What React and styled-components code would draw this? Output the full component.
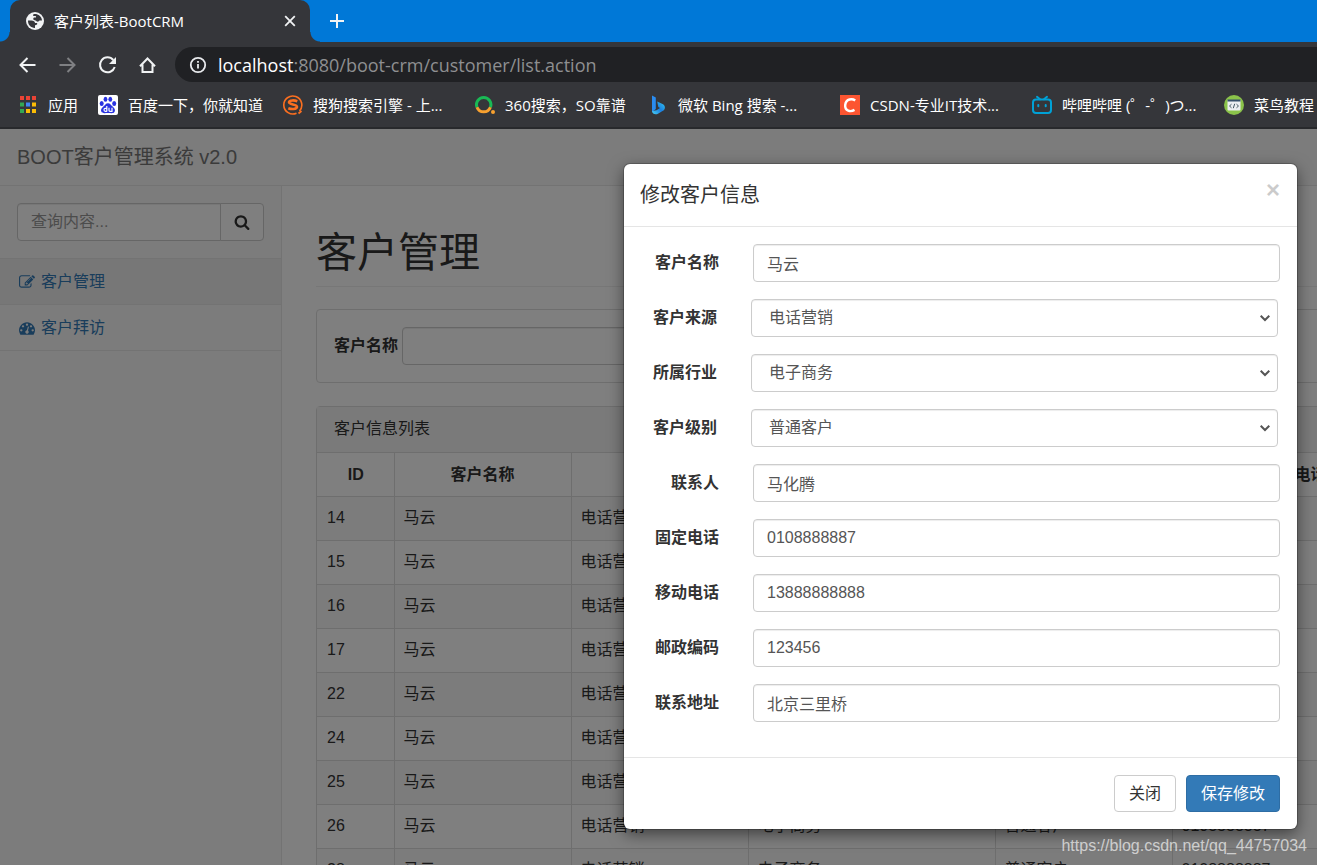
import { useState } from 'react';
import { styled, createGlobalStyle, ThemeProvider } from 'styled-components';

const theme = {
  colors: {
    chrome: '#35363a',
    omnibox: '#202124',
    strip: '#0078d7',
    text: '#333333',
    field: '#555555',
    link: '#337ab7',
    border: '#dddddd',
    light: '#eeeeee',
    lightest: '#f8f8f8',
  },
  fonts: {
    page: '"Liberation Sans", "Noto Sans CJK SC", sans-serif',
    chrome: '"Open Sans", "Noto Sans CJK SC", sans-serif',
  },
};

const GlobalStyle = createGlobalStyle`
  *, *::before, *::after {
    box-sizing: border-box;
  }
  body {
    margin: 0;
    overflow: hidden;
  }
  button, input, select {
    font: inherit;
    color: inherit;
    margin: 0;
  }
  svg {
    display: block;
    flex: none;
  }
`;

/* ---------- browser frame ---------- */

const Screen = styled.div`
  display: flex;
  flex-direction: column;
  height: 100vh;
  overflow: hidden;
  font-family: ${p => p.theme.fonts.page};
  font-size: 16px;
  line-height: 22px;
  color: ${p => p.theme.colors.text};
`;
const Chrome = styled.header`
  flex: none;
  background-color: ${p => p.theme.colors.chrome};
  border-bottom: 2px solid #28292c;
  font-family: ${p => p.theme.fonts.chrome};
  color: #ffffff;
`;
const TabStrip = styled.div`
  display: flex;
  align-items: center;
  height: 42px;
  padding-left: 10px;
  background-color: ${p => p.theme.colors.strip};
`;
const Tab = styled.div`
  position: relative;
  display: flex;
  align-items: center;
  width: 300px;
  height: 42px;
  padding: 0 14px 0 16px;
  border-radius: 10px 10px 0 0;
  background-color: ${p => p.theme.colors.chrome};
  font-size: 15px;
  &::before,
  &::after {
    content: '';
    position: absolute;
    bottom: 0;
    width: 10px;
    height: 10px;
  }
  &::before {
    right: 100%;
    background: radial-gradient(circle at 0 0, transparent 9px, ${p => p.theme.colors.chrome} 10px);
  }
  &::after {
    left: 100%;
    background: radial-gradient(circle at 100% 0, transparent 9px, ${p => p.theme.colors.chrome} 10px);
  }
`;
const TabTitle = styled.span`
  flex: 1;
  margin-left: 10px;
  white-space: nowrap;
`;
const IconButton = styled.button`
  display: flex;
  align-items: center;
  justify-content: center;
  width: ${p => p.$size}px;
  height: ${p => p.$size}px;
  padding: 0;
  border: 0;
  background: none;
  color: ${p => (p.$dim ? '#7f8083' : '#f1f3f4')};
`;
const NewTab = styled(IconButton)`
  margin-left: 17px;
`;
const Toolbar = styled.div`
  display: flex;
  align-items: center;
  gap: 20px;
  height: 45px;
  padding-left: 18px;
`;
const Omnibox = styled.div`
  display: flex;
  align-items: center;
  flex: 1;
  height: 35px;
  margin-left: -3px;
  padding-left: 14px;
  border-radius: 18px 0 0 18px;
  background-color: ${p => p.theme.colors.omnibox};
  font-size: 18px;
  white-space: nowrap;
`;
const Address = styled.span`
  margin-left: 11px;
  color: #8e8f91;
  b {
    font-weight: 400;
    color: #ffffff;
  }
`;
const Bookmarks = styled.nav`
  display: flex;
  align-items: center;
  gap: 20px;
  height: 40px;
  padding: 0 0 4px 18px;
  overflow: hidden;
`;
const Bookmark = styled.a`
  display: flex;
  align-items: center;
  gap: 10px;
  flex: none;
  width: ${p => (p.$width ? `${p.$width}px` : 'auto')};
  color: #ffffff;
  font-size: 15px;
  line-height: 20px;
  text-decoration: none;
  white-space: nowrap;
`;

/* ---------- page ---------- */

const Page = styled.div`
  position: relative;
  display: flex;
  flex-direction: column;
  flex: 1;
  min-height: 0;
  background-color: #ffffff;
`;
const Navbar = styled.div`
  flex: none;
  height: 57px;
  padding: 17px;
  border-bottom: 1px solid #e7e7e7;
  background-color: ${p => p.theme.colors.lightest};
`;
const Brand = styled.a`
  color: #777777;
  font-size: 20px;
  text-decoration: none;
`;
const Columns = styled.div`
  display: flex;
  flex: 1;
  min-height: 0;
`;
const Sidebar = styled.aside`
  flex: none;
  width: 282px;
  border-right: 1px solid #e7e7e7;
  background-color: ${p => p.theme.colors.lightest};
`;
const SearchForm = styled.form`
  display: flex;
  padding: 17px;
  border-bottom: 1px solid #e7e7e7;
`;
const TextBox = styled.input`
  width: 100%;
  min-width: 0;
  height: 38px;
  padding: 6px 13px;
  border: 1px solid #cccccc;
  border-radius: 4px;
  background-color: #ffffff;
  box-shadow: inset 0 1px 1px rgba(0, 0, 0, 0.075);
  color: ${p => p.theme.colors.field};
  &::placeholder {
    color: #999999;
  }
`;
const SearchBox = styled(TextBox)`
  flex: 1;
  border-radius: 4px 0 0 4px;
`;
const SearchButton = styled.button`
  display: flex;
  align-items: center;
  justify-content: center;
  width: 44px;
  height: 38px;
  margin-left: -1px;
  border: 1px solid #cccccc;
  border-radius: 0 4px 4px 0;
  background-color: #ffffff;
`;
const MenuLink = styled.a`
  display: flex;
  align-items: center;
  gap: 6px;
  height: 46px;
  padding: 0 19px;
  border-bottom: 1px solid #e7e7e7;
  background-color: ${p => (p.$active ? p.theme.colors.light : 'transparent')};
  color: ${p => p.theme.colors.link};
  text-decoration: none;
`;
const Main = styled.main`
  flex: 1;
  min-width: 0;
  padding: 44px 0 0 34px;
  overflow: hidden;
`;
const Heading = styled.h1`
  margin: 0 0 22px;
  padding-bottom: 10px;
  border-bottom: 1px solid #eeeeee;
  font-size: 41px;
  line-height: 46px;
  font-weight: 400;
`;
const Panel = styled.section`
  width: max-content;
  min-width: 1590px;
  margin-bottom: 23px;
  border: 1px solid ${p => p.theme.colors.border};
  border-radius: 4px;
`;
const FilterForm = styled.form`
  display: flex;
  align-items: center;
  gap: 4px;
  padding: 17px;
  label {
    font-weight: 700;
  }
  input {
    width: 232px;
  }
`;
const PanelTitle = styled.div`
  height: 46px;
  padding: 11px 17px;
  border-bottom: 1px solid ${p => p.theme.colors.border};
  background-color: #f5f5f5;
`;
const Table = styled.table`
  width: 100%;
  table-layout: fixed;
  border-collapse: collapse;
  tr {
    height: 44px;
  }
  thead tr {
    height: 43px;
  }
  tbody tr:nth-child(odd) {
    background-color: #f9f9f9;
  }
  th,
  td {
    padding: 10px 9px;
    border: 1px solid ${p => p.theme.colors.border};
    border-top: 0;
  }
  th {
    padding-bottom: 8px;
  }
  th:first-child,
  td:first-child {
    padding-left: 10px;
    border-left: 0;
  }
`;
const Col = styled.col`
  width: ${p => (p.$width ? `${p.$width}px` : 'auto')};
`;

/* ---------- dialog ---------- */

const Backdrop = styled.div`
  position: absolute;
  inset: 0;
  display: flex;
  justify-content: flex-end;
  align-items: flex-start;
  padding: 35px 20px 0;
  background-color: rgba(0, 0, 0, 0.5);
`;
const Dialog = styled.div`
  width: 673px;
  border-radius: 6px;
  background-color: #ffffff;
  box-shadow:
    0 0 0 1px rgba(0, 0, 0, 0.2),
    0 5px 16px rgba(0, 0, 0, 0.5);
`;
const DialogHeader = styled.div`
  display: flex;
  justify-content: space-between;
  padding: 17px 17px 16px 16px;
  border-bottom: 1px solid #e5e5e5;
`;
const DialogTitle = styled.h4`
  margin: 0;
  font-size: 20px;
  line-height: 29px;
  font-weight: 400;
`;
const CloseButton = styled.button`
  height: 18px;
  padding: 0;
  border: 0;
  background: none;
  color: #000000;
  font-size: 24px;
  font-weight: 700;
  line-height: 18px;
  opacity: 0.2;
`;
const DialogBody = styled.form`
  display: grid;
  gap: 17px;
  padding: 17px 17px 35px;
`;
const FormRow = styled.div`
  display: grid;
  grid-template-columns: ${p => (p.$select ? '76px' : '78px')} 1fr;
  column-gap: 34px;
  align-items: center;
  padding-right: ${p => (p.$select ? '2px' : '0')};
`;
const FieldLabel = styled.label`
  font-weight: 700;
  text-align: right;
`;
const SelectWrap = styled.div`
  position: relative;
  color: ${p => p.theme.colors.field};
  svg {
    position: absolute;
    top: 14px;
    right: 8px;
    pointer-events: none;
  }
`;
const Select = styled(TextBox).attrs({ as: 'select' })`
  appearance: none;
  padding: 6px 17px;
`;
const DialogFooter = styled.div`
  display: flex;
  justify-content: flex-end;
  gap: 10px;
  padding: 17px;
  border-top: 1px solid #e5e5e5;
`;
const Button = styled.button`
  height: 37px;
  padding: 0 14px;
  border: 1px solid ${p => (p.$primary ? '#2e6da4' : '#cccccc')};
  border-radius: 4px;
  background-color: ${p => (p.$primary ? p.theme.colors.link : '#ffffff')};
  color: ${p => (p.$primary ? '#ffffff' : p.theme.colors.text)};
`;
const Watermark = styled.span`
  position: absolute;
  right: 10px;
  bottom: 8px;
  color: rgba(255, 255, 255, 0.65);
  font-size: 16px;
`;

/* ---------- icons ---------- */

const Stroke = ({ size = 20, width = 2, children }) => (
  <svg width={size} height={size} viewBox="0 0 20 20" fill="none" stroke="currentColor" strokeWidth={width}>
    {children}
  </svg>
);

const Glyph = ({ size, d }) => (
  <svg width={size} height={size} viewBox="0 0 1792 1792" fill="currentColor">
    <path d={d} />
  </svg>
);

const searchPath =
  'M1216 832q0-185-131.5-316.5t-316.5-131.5-316.5 131.5-131.5 316.5 131.5 316.5 316.5 131.5 316.5-131.5 131.5-316.5zm512 832q0 52-38 90t-90 38q-54 0-90-38l-343-342q-179 124-399 124-143 0-273.5-55.5t-225-150-150-225-55.5-273.5 55.5-273.5 150-225 225-150 273.5-55.5 273.5 55.5 225 150 150 225 55.5 273.5q0 220-124 399l343 343q37 37 37 90z';
const editPath =
  'M888 1184l116-116-152-152-116 116v56h96v96h56zm440-720q-16-16-33 1l-350 350q-17 17-1 33t33-1l350-350q17-17 1-33zm80 594v190q0 119-84.5 203.5t-203.5 84.5h-832q-119 0-203.5-84.5t-84.5-203.5v-832q0-119 84.5-203.5t203.5-84.5h832q63 0 117 25 15 7 18 23 3 17-9 29l-49 49q-14 14-32 8-23-6-45-6h-832q-66 0-113 47t-47 113v832q0 66 47 113t113 47h832q66 0 113-47t47-113v-126q0-13 9-22l64-64q15-15 35-7t20 29zm-96-738l288 288-672 672h-288v-288zm444 132l-92 92-288-288 92-92q28-28 68-28t68 28l152 152q28 28 28 68t-28 68z';
const dashboardPath =
  'M384 1152q0-53-37.5-90.5t-90.5-37.5-90.5 37.5-37.5 90.5 37.5 90.5 90.5 37.5 90.5-37.5 37.5-90.5zm192-448q0-53-37.5-90.5t-90.5-37.5-90.5 37.5-37.5 90.5 37.5 90.5 90.5 37.5 90.5-37.5 37.5-90.5zm428 481l101-382q6-26-7.5-48.5t-38.5-29.5-48 6.5-30 39.5l-101 382q-60 5-107 43.5t-63 98.5q-20 77 20 146t117 89 146-20 89-117q16-60-6-117t-72-91zm660-33q0-53-37.5-90.5t-90.5-37.5-90.5 37.5-37.5 90.5 37.5 90.5 90.5 37.5 90.5-37.5 37.5-90.5zm-640-640q0-53-37.5-90.5t-90.5-37.5-90.5 37.5-37.5 90.5 37.5 90.5 90.5 37.5 90.5-37.5 37.5-90.5zm448 192q0-53-37.5-90.5t-90.5-37.5-90.5 37.5-37.5 90.5 37.5 90.5 90.5 37.5 90.5-37.5 37.5-90.5zm320 448q0 261-141 483-19 29-54 29h-1402q-35 0-54-29-141-221-141-483 0-182 71-348t191-286 286-191 348-71 348 71 286 191 191 286 71 348z';

const GlobeIcon = () => (
  <svg width="18" height="18" viewBox="0 0 18 18">
    <circle cx="9" cy="9" r="9" fill="#f1f3f4" />
    <path
      d="M2 8.500h3.500c2 0 3.500 1 3.500 2.500h2c1 1.500-.5 2-2 2.200V15.900C5 16 1.800 12.700 2 8.500z M7.500 2.200c4-.8 8.200 2 8.500 6.300h-2.500c-.6 1.200-1.800 1.500-3 .8-.5-1-1.500-1-2.500-1.300-1.200-.8-.8-2 0-2.600h2c.5-1.200-.5-1.600-2-1.400-1 0-1.200-1-.5-1.800z"
      fill="#35363a"
    />
  </svg>
);

const AppsIcon = () => (
  <svg width="20" height="20" viewBox="0 0 20 20">
    {[
      ['#ea4335', '#ea4335', '#ea4335'],
      ['#34a853', '#4285f4', '#fbbc05'],
      ['#34a853', '#fbbc05', '#fbbc05'],
    ].map((row, y) =>
      row.map((fill, x) => (
        <rect key={`${x}${y}`} x={2 + x * 6} y={1 + y * 6.5} width="4" height="4" fill={fill} />
      )),
    )}
  </svg>
);

const BaiduIcon = () => (
  <svg width="20" height="20" viewBox="0 0 20 20">
    <rect width="20" height="20" rx="2" fill="#ffffff" />
    <g fill="#2932e1">
      <ellipse cx="3.700" cy="8.600" rx="2" ry="2.500" />
      <ellipse cx="7.500" cy="4.200" rx="1.900" ry="2.500" />
      <ellipse cx="12.300" cy="4.200" rx="1.900" ry="2.500" />
      <ellipse cx="16.200" cy="8.400" rx="2" ry="2.500" />
      <path d="M10 8.200c2.300 0 3 2 4.600 3.400 1.900 1.600 3 3.400 2 5.200-1.200 2.200-4 1.200-6.600 1.200s-5.400 1-6.600-1.200c-1-1.800.1-3.600 2-5.200C7 10.200 7.700 8.200 10 8.200z" />
    </g>
    <g fill="none" stroke="#ffffff" strokeWidth="1.200">
      <path d="M8.800 11v5.400M8.800 13.300H7.300q-1.300 0-1.300 1.500t1.300 1.500h1.500M11 12.800v2.500q0 1 1 1h2v-3.500" />
    </g>
  </svg>
);

const SogouIcon = () => (
  <svg width="20" height="20" viewBox="0 0 20 20" fill="none" stroke="#fb6f20">
    <path d="M16.500 16A9 9 0 1 0 13.500 18.200" strokeWidth="1.600" />
    <path
      d="M14.300 6.200c-2.500-1-8-1.400-8.300 1-.2 2.700 8.300 1.800 8 4.700-.3 2.600-5.800 2.500-8.700 1.300"
      strokeWidth="2.600"
    />
    <path d="M15.500 18.500l3-2.500" strokeWidth="1.800" />
  </svg>
);

const So360Icon = () => (
  <svg width="20" height="20" viewBox="0 0 20 20" fill="none" strokeWidth="3">
    <path d="M2 12.300a7.200 7.200 0 1 1 13.400 0" stroke="#19b955" />
    <path d="M2 12.300a7.200 7.200 0 0 0 13.400 0" stroke="#f8a12f" />
    <circle cx="18" cy="17" r="2" fill="#f8a12f" stroke="none" />
  </svg>
);

const BingIcon = () => (
  <svg width="20" height="20" viewBox="0 0 20 20">
    <defs>
      <linearGradient id="bing" x1="0" y1="1" x2="1" y2="0">
        <stop offset="0" stopColor="#49d2f5" />
        <stop offset="0.500" stopColor="#1b7fe0" />
        <stop offset="1" stopColor="#35c8ee" />
      </linearGradient>
    </defs>
    <path d="M4 .5l3.800 2V14L4 17z" fill="#2a8cf0" />
    <path d="M9.200 6.500l5.300 2.400c2.700 1.400 3.200 4.300 1.300 6.400L9.500 19c-2.500 1-5.300-.3-5.500-3l4.500-.8 3.500-2.300-1.700-.9z" fill="url(#bing)" />
  </svg>
);

const CsdnIcon = () => (
  <svg width="20" height="20" viewBox="0 0 20 20">
    <rect width="20" height="20" fill="#fc5531" />
    <path d="M15.200 5.500C12.500 3.500 6 3.400 5.200 10c-.6 6.200 5.500 7.200 9.300 4.900" fill="none" stroke="#ffffff" strokeWidth="2.400" />
  </svg>
);

const BiliIcon = () => (
  <svg width="20" height="20" viewBox="0 0 20 20" fill="none" stroke="#00a1d6" strokeWidth="2" strokeLinecap="round">
    <rect x="1" y="4.500" width="18" height="13.500" rx="3" />
    <path d="M5 1.800l3 2.500M15 1.800l-3 2.500M6.300 10v1.200M13.700 10v1.200" />
  </svg>
);

const RunoobIcon = () => (
  <svg width="20" height="20" viewBox="0 0 20 20">
    <circle cx="10" cy="10" r="10" fill="#8bc34a" />
    <path d="M3.500 5h13v9.500q0 1-1 1h-11q-1 0-1-1z" fill="#eceff1" />
    <path d="M3.500 4.500h13v2h-13z" fill="#37516a" />
    <path d="M7.500 9.200l-2 1.800 2 1.800M12.500 9.200l2 1.800-2 1.800M10.700 8.800l-1.400 4.400" fill="none" stroke="#455a64" />
  </svg>
);

/* ---------- data ---------- */

const bookmarks = [
  { title: '应用', Icon: AppsIcon },
  { title: '百度一下，你就知道', Icon: BaiduIcon },
  { title: '搜狗搜索引擎 - 上...', Icon: SogouIcon, width: 172 },
  { title: '360搜索，SO靠谱', Icon: So360Icon, width: 153 },
  { title: '微软 Bing 搜索 -...', Icon: BingIcon, width: 172 },
  { title: 'CSDN-专业IT技术...', Icon: CsdnIcon, width: 172 },
  { title: '哔哩哔哩 (゜-゜)つ...', Icon: BiliIcon, width: 172 },
  { title: '菜鸟教程', Icon: RunoobIcon },
];

const columns = [
  { title: 'ID', width: 77 },
  { title: '客户名称', width: 177 },
  { title: '客户来源', width: 177 },
  { title: '客户所属行业', width: 247 },
  { title: '客户级别', width: 177 },
  { title: '固定电话', width: 245 },
  { title: '手机' },
];

const customers = [14, 15, 16, 17, 22, 24, 25, 26, 28].map(id => ({
  id,
  cells: ['马云', '电话营销', '电子商务', '普通客户', '0108888887', '13888888888'],
}));

const fields = [
  { name: 'cust_name', label: '客户名称', value: '马云' },
  { name: 'cust_source', label: '客户来源', value: '电话营销', options: ['电话营销', '网络营销'] },
  { name: 'cust_industry', label: '所属行业', value: '电子商务', options: ['电子商务', '教育培训'] },
  { name: 'cust_level', label: '客户级别', value: '普通客户', options: ['普通客户', 'VIP客户'] },
  { name: 'cust_linkman', label: '联系人', value: '马化腾' },
  { name: 'cust_phone', label: '固定电话', value: '0108888887' },
  { name: 'cust_mobile', label: '移动电话', value: '13888888888' },
  { name: 'cust_zipcode', label: '邮政编码', value: '123456' },
  { name: 'cust_address', label: '联系地址', value: '北京三里桥' },
];

/* ---------- components ---------- */

const BrowserChrome = () => (
  <Chrome>
    <TabStrip>
      <Tab>
        <GlobeIcon />
        <TabTitle>客户列表-BootCRM</TabTitle>
        <IconButton $size={12} aria-label="关闭标签页">
          <Stroke size={12} width={3}>
            <path d="M2 2l16 16M18 2L2 18" />
          </Stroke>
        </IconButton>
      </Tab>
      <NewTab $size={20} aria-label="新标签页">
        <Stroke>
          <path d="M10 3v14M3 10h14" />
        </Stroke>
      </NewTab>
    </TabStrip>
    <Toolbar>
      <IconButton $size={20} aria-label="后退">
        <Stroke>
          <path d="M17.500 10H3M9.500 3l-7 7 7 7" />
        </Stroke>
      </IconButton>
      <IconButton $size={20} $dim aria-label="前进">
        <Stroke>
          <path d="M1.500 10H16M9.500 3l7 7-7 7" />
        </Stroke>
      </IconButton>
      <IconButton $size={20} aria-label="重新加载">
        <Stroke>
          <path d="M15.300 5A7.500 7.500 0 1 0 16.700 12" />
          <path d="M18 2v7h-7z" fill="currentColor" stroke="none" />
        </Stroke>
      </IconButton>
      <IconButton $size={20} aria-label="主页">
        <Stroke>
          <path d="M2 11.300L9.500 3.500l7.500 7.800M4.500 9.500V17h10V9.500" />
        </Stroke>
      </IconButton>
      <Omnibox>
        <Stroke size={18}>
          <circle cx="10" cy="10" r="8" stroke="#e8eaed" />
          <path d="M10 9v5M10 5.500v2" stroke="#e8eaed" />
        </Stroke>
        <Address>
          <b>localhost</b>:8080/boot-crm/customer/list.action
        </Address>
      </Omnibox>
    </Toolbar>
    <Bookmarks>
      {bookmarks.map(({ title, Icon, width }) => (
        <Bookmark key={title} href="#" $width={width}>
          <Icon />
          {title}
        </Bookmark>
      ))}
    </Bookmarks>
  </Chrome>
);

const SideMenu = () => (
  <Sidebar>
    <SearchForm>
      <SearchBox type="text" placeholder="查询内容..." aria-label="查询内容" />
      <SearchButton type="button" aria-label="查询">
        <Glyph size={16} d={searchPath} />
      </SearchButton>
    </SearchForm>
    <MenuLink href="#" $active>
      <Glyph size={16} d={editPath} />
      客户管理
    </MenuLink>
    <MenuLink href="#">
      <Glyph size={16} d={dashboardPath} />
      客户拜访
    </MenuLink>
  </Sidebar>
);

const CustomerTable = () => (
  <Panel>
    <PanelTitle>客户信息列表</PanelTitle>
    <Table>
      <colgroup>
        {columns.map(c => (
          <Col key={c.title} $width={c.width} />
        ))}
      </colgroup>
      <thead>
        <tr>
          {columns.map(c => (
            <th key={c.title}>{c.title}</th>
          ))}
        </tr>
      </thead>
      <tbody>
        {customers.map(({ id, cells }) => (
          <tr key={id}>
            <td>{id}</td>
            {cells.map(cell => (
              <td key={cell}>{cell}</td>
            ))}
          </tr>
        ))}
      </tbody>
    </Table>
  </Panel>
);

const Field = ({ field, value, onChange }) => {
  const { name, label, options } = field;
  return (
    <FormRow $select={Boolean(options)}>
      <FieldLabel htmlFor={name}>{label}</FieldLabel>
      {options ? (
        <SelectWrap>
          <Select id={name} value={value} onChange={onChange}>
            {options.map(o => (
              <option key={o}>{o}</option>
            ))}
          </Select>
          <svg width="10" height="10" viewBox="0 0 10 10" fill="none" stroke="currentColor" strokeWidth="2">
            <path d="M.7 2.800L5 7l4.300-4.200" />
          </svg>
        </SelectWrap>
      ) : (
        <TextBox id={name} type="text" value={value} onChange={onChange} />
      )}
    </FormRow>
  );
};

const EditDialog = () => {
  const [values, setValues] = useState(() => Object.fromEntries(fields.map(f => [f.name, f.value])));
  return (
    <Backdrop>
      <Dialog role="dialog" aria-labelledby="edit-title">
        <DialogHeader>
          <DialogTitle id="edit-title">修改客户信息</DialogTitle>
          <CloseButton type="button" aria-label="Close">
            ×
          </CloseButton>
        </DialogHeader>
        <DialogBody>
          {fields.map(f => (
            <Field
              key={f.name}
              field={f}
              value={values[f.name]}
              onChange={e => setValues({ ...values, [f.name]: e.target.value })}
            />
          ))}
        </DialogBody>
        <DialogFooter>
          <Button type="button">关闭</Button>
          <Button type="button" $primary>
            保存修改
          </Button>
        </DialogFooter>
      </Dialog>
    </Backdrop>
  );
};

export default function App() {
  return (
    <ThemeProvider theme={theme}>
      <GlobalStyle />
      <Screen>
        <BrowserChrome />
        <Page>
          <Navbar>
            <Brand href="#">BOOT客户管理系统 v2.0</Brand>
          </Navbar>
          <Columns>
            <SideMenu />
            <Main>
              <Heading>客户管理</Heading>
              <Panel>
                <FilterForm>
                  <label htmlFor="customerName">客户名称</label>
                  <TextBox id="customerName" type="text" />
                </FilterForm>
              </Panel>
              <CustomerTable />
            </Main>
          </Columns>
          <EditDialog />
          <Watermark>https://blog.csdn.net/qq_44757034</Watermark>
        </Page>
      </Screen>
    </ThemeProvider>
  );
}
